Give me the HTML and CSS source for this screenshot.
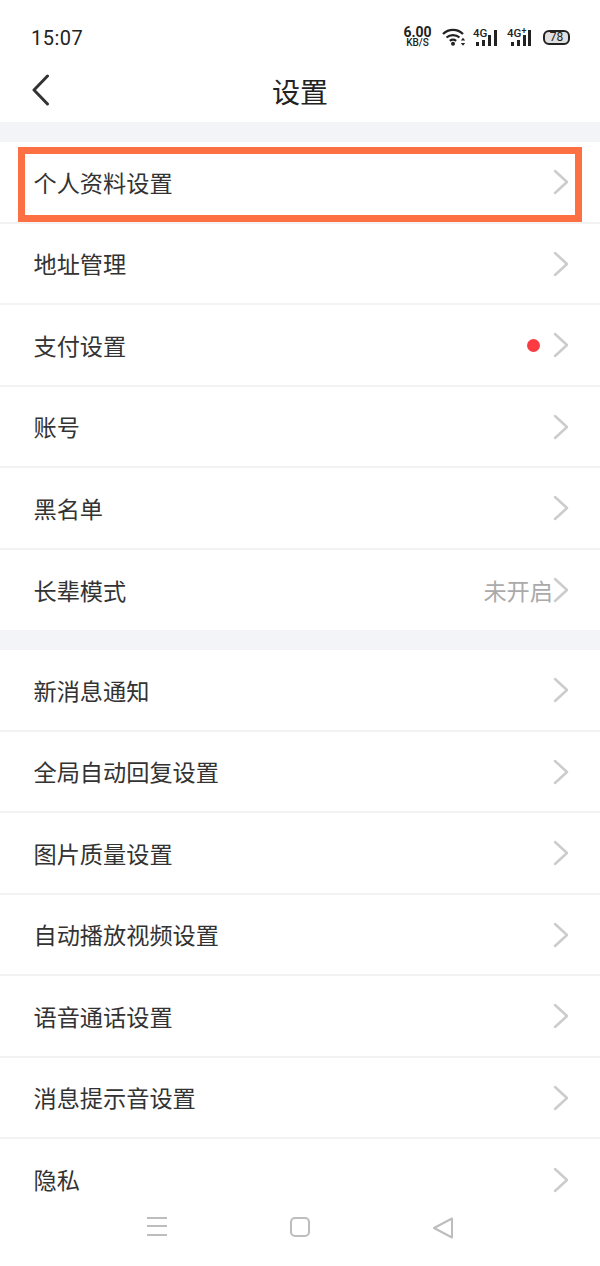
FILE: index.html
```html
<!DOCTYPE html>
<html lang="zh">
<head>
  <meta charset="UTF-8">
  <title>设置</title>
  <link rel="stylesheet" href="styles.css">
</head>
<body>
  <div class="screen">
    <div class="statusbar">
      <span class="time">15:07</span>
      <div class="status-icons">
        <div class="speed"><b>6.00</b><span>KB/S</span></div>
        <svg class="wifi" width="24" height="18" viewBox="0 0 24 18">
          <path d="M1 6C6.500 0.500 15.500 0.500 21 6M4.500 9.500C8 6.300 14 6.300 17.500 9.500M7.800 12.800C9.800 11.300 12.200 11.300 14.200 12.800" fill="none" stroke="#222" stroke-width="2.200"/>
          <circle cx="11" cy="15.800" r="2" fill="#222"/>
          <path d="M21 9.800l2.200 2.700h-4.400zM21 17.800l2.200-2.700h-4.400z" fill="#222"/>
        </svg>
        <div class="signal">
          <span class="net">4G</span>
          <svg width="24" height="17" viewBox="0 0 24 17"><path d="M3 13h3v4H3zM9 11h3v6H9zM15 6h3v11h-3zM21 1h3v16h-3z" fill="#222"/></svg>
        </div>
        <div class="signal signal-plus">
          <span class="net">4G<sup>+</sup></span>
          <svg width="24" height="17" viewBox="0 0 24 17"><path d="M4 13h3v4H4zM10 11h3v6h-3zM16 6h3v11h-3zM21 1h3v16h-3z" fill="#222"/></svg>
        </div>
        <div class="battery"><span>78</span></div>
      </div>
    </div>

    <div class="navbar">
      <svg class="back" width="18" height="32" viewBox="0 0 18 32"><path d="M15.500 2L2 16l13.500 14" fill="none" stroke="#333" stroke-width="3" stroke-linecap="round" stroke-linejoin="round"/></svg>
      <h1>设置</h1>
    </div>

    <div class="gap"></div>
    <ul class="group">
      <li class="row"><span class="label">个人资料设置</span><svg class="arrow" viewBox="0 0 16 26"><path d="M2 2l12 11L2 24"/></svg><div class="highlight"></div></li>
      <li class="row"><span class="label">地址管理</span><svg class="arrow" viewBox="0 0 16 26"><path d="M2 2l12 11L2 24"/></svg></li>
      <li class="row"><span class="label">支付设置</span><i class="dot"></i><svg class="arrow" viewBox="0 0 16 26"><path d="M2 2l12 11L2 24"/></svg></li>
      <li class="row"><span class="label">账号</span><svg class="arrow" viewBox="0 0 16 26"><path d="M2 2l12 11L2 24"/></svg></li>
      <li class="row"><span class="label">黑名单</span><svg class="arrow" viewBox="0 0 16 26"><path d="M2 2l12 11L2 24"/></svg></li>
      <li class="row"><span class="label">长辈模式</span><span class="value">未开启</span><svg class="arrow" viewBox="0 0 16 26"><path d="M2 2l12 11L2 24"/></svg></li>
    </ul>
    <div class="gap"></div>
    <ul class="group">
      <li class="row"><span class="label">新消息通知</span><svg class="arrow" viewBox="0 0 16 26"><path d="M2 2l12 11L2 24"/></svg></li>
      <li class="row"><span class="label">全局自动回复设置</span><svg class="arrow" viewBox="0 0 16 26"><path d="M2 2l12 11L2 24"/></svg></li>
      <li class="row"><span class="label">图片质量设置</span><svg class="arrow" viewBox="0 0 16 26"><path d="M2 2l12 11L2 24"/></svg></li>
      <li class="row"><span class="label">自动播放视频设置</span><svg class="arrow" viewBox="0 0 16 26"><path d="M2 2l12 11L2 24"/></svg></li>
      <li class="row"><span class="label">语音通话设置</span><svg class="arrow" viewBox="0 0 16 26"><path d="M2 2l12 11L2 24"/></svg></li>
      <li class="row"><span class="label">消息提示音设置</span><svg class="arrow" viewBox="0 0 16 26"><path d="M2 2l12 11L2 24"/></svg></li>
      <li class="row"><span class="label">隐私</span><svg class="arrow" viewBox="0 0 16 26"><path d="M2 2l12 11L2 24"/></svg></li>
    </ul>

    <div class="sysnav">
      <svg width="22" height="20" viewBox="0 0 22 20"><path d="M1 2h20M1 10h20M1 19h20" fill="none" stroke="#bdbdbd" stroke-width="2"/></svg>
      <svg width="22" height="22" viewBox="0 0 22 22"><rect x="2" y="2" width="18" height="18" rx="4" fill="none" stroke="#bdbdbd" stroke-width="2"/></svg>
      <svg width="22" height="24" viewBox="0 0 22 24"><path d="M20 2.500v19L2 12z" fill="none" stroke="#bdbdbd" stroke-width="2" stroke-linejoin="round"/></svg>
    </div>
  </div>
</body>
</html>
```

FILE: styles.css
```css
html, body { margin: 0; padding: 0; background: #fff; }
body { font-family: "Noto Sans CJK SC", "Liberation Sans", sans-serif; color: #333; }
.screen { position: relative; width: 600px; height: 1266px; overflow: hidden; background: #fff; }

.statusbar { height: 64px; padding: 9px 30px 0 31px; box-sizing: border-box; display: flex; justify-content: space-between; align-items: center; }
.time { font-family: Roboto, "Liberation Sans", sans-serif; font-size: 20px; color: #222; letter-spacing: 0.5px; position: relative; top: 1px; }
.status-icons { display: flex; align-items: flex-end; height: 20px; position: relative; top: -1px; }
.speed { width: 27px; display: flex; flex-direction: column; align-items: center; font-family: Roboto, sans-serif; color: #222; margin-right: 11px; margin-bottom: -1px; }
.speed b { font-size: 14px; font-weight: 700; line-height: 11px; }
.speed span { font-size: 10px; font-weight: 500; line-height: 8px; margin-top: 1px; }
.wifi { margin-right: 7px; }
.signal { position: relative; width: 24px; height: 17px; margin-right: 10px; }
.signal svg { display: block; }
.signal-plus { margin-right: 12px; }
.net { position: absolute; left: 0; top: -2px; font-family: Roboto, sans-serif; font-size: 11.500px; font-weight: 500; color: #222; line-height: 12px; }
.net sup { font-size: 9px; line-height: 0; vertical-align: 3px; }
.battery { width: 27px; height: 15px; box-sizing: border-box; border: 2px solid #222; border-radius: 6px; background: #e0e0e0; display: flex; align-items: center; justify-content: center; margin-bottom: 1px; }
.battery span { font-family: Roboto, sans-serif; font-size: 12px; color: #222; line-height: 12px; }

.navbar { height: 58px; display: flex; align-items: center; justify-content: center; position: relative; }
.navbar h1 { margin: 0; font-size: 28px; font-weight: 400; color: #222; line-height: 40px; position: relative; top: -2px; }
.back { position: absolute; left: 32px; top: 10px; }

.gap { height: 20px; background: #f3f4f8; }
.group { list-style: none; margin: 0; padding: 0; }
.row { position: relative; height: 81.500px; box-sizing: border-box; padding: 0 31px 0 33.500px; display: flex; align-items: center; border-bottom: 2px solid #f3f3f3; }
.group .row:last-child { height: 80.500px; border-bottom: 0; }
.label { flex: 1; font-size: 23.200px; color: #333; line-height: 30px; }
.value { font-size: 23.200px; color: #aaa; line-height: 30px; }
.dot { width: 13px; height: 13px; border-radius: 50%; background: #fb3b42; margin-right: 13px; margin-top: 1px; }
.arrow { width: 16px; height: 26px; margin-top: 1px; fill: none; stroke: #ccc; stroke-width: 2.500; stroke-linecap: round; stroke-linejoin: round; }

.highlight { position: absolute; left: 18px; right: 18px; top: 5px; height: 75px; box-sizing: border-box; border: 7px solid #fd7043; }

.sysnav { position: absolute; left: 0; right: 0; bottom: 0; height: 66px; background: #fff; display: flex; justify-content: center; align-items: flex-start; gap: 121px; padding-top: 16px; box-sizing: border-box; }
```
